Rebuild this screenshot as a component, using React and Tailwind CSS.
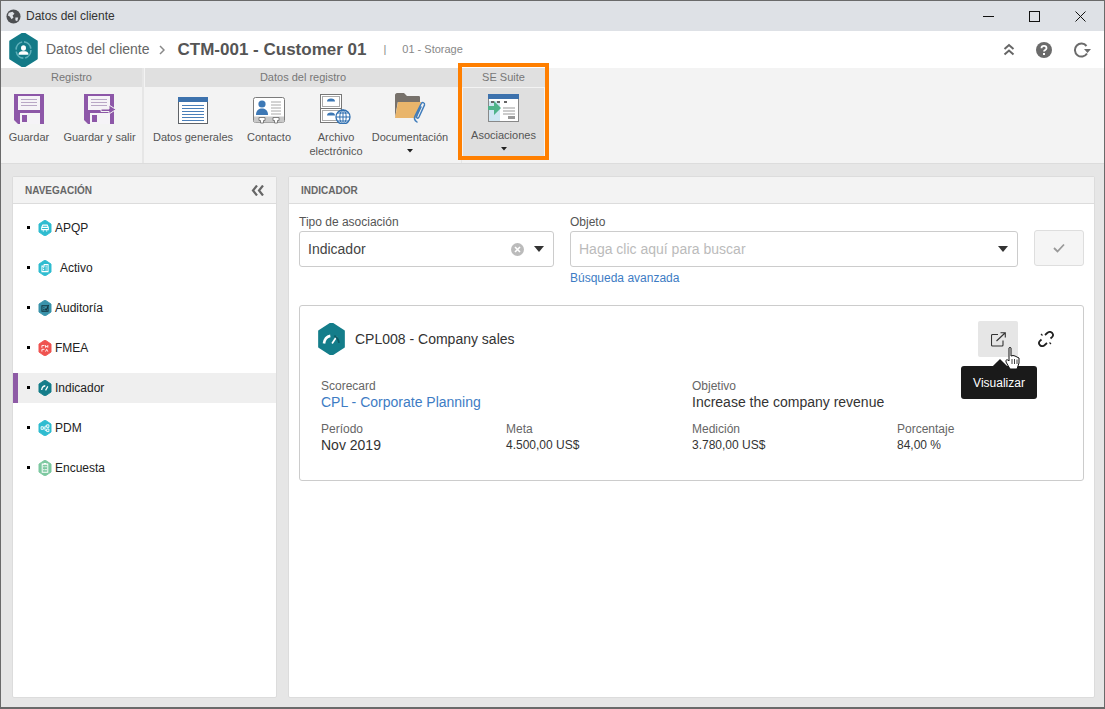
import React from "react";

const HEX = "M50 0 L93 25 L93 75 L50 100 L7 75 L7 25 Z";

function Hex({ color, size = 14, children }) {
  return (
    <svg width={size} height={size * 1.15} viewBox="0 0 100 100" preserveAspectRatio="none" className="shrink-0">
      <path d={HEX} fill={color} stroke={color} strokeWidth="6" strokeLinejoin="round" />
      {children}
    </svg>
  );
}

const SaveIcon = ({ exit }) => (
  <svg width={exit ? 32 : 30} height="30" viewBox={exit ? "0 0 32 30" : "0 0 30 30"}>
    <path d="M0 0H30V30H4L0 26Z" fill="#8d57a8" />
    <rect x="4" y="2" width="22" height="14" fill="#f5f3f7" />
    <path d="M7 5.5H23M7 8.5H23M7 11.5H23" stroke="#b9a7c6" strokeWidth="1" />
    <rect x="6" y="19" width="20" height="11" fill="#f5f3f7" />
    <rect x="8" y="21" width="5" height="7" fill="#8d57a8" />
    {exit && <path d="M17 15H25V11L32 15.5L25 20V17.5H17Z" fill="#8d57a8" stroke="#f3f3f3" strokeWidth="1" />}
  </svg>
);

const DocIcon = () => (
  <svg width="30" height="27" viewBox="0 0 30 27">
    <rect x="0.5" y="0.5" width="29" height="26" fill="#fff" stroke="#5f6368" />
    <rect x="0" y="0" width="30" height="5" fill="#3d72ad" />
    <path d="M4 8.5H26M4 11.5H26M4 14.5H26M4 17.5H26M4 20.5H26M4 23.5H26" stroke="#4a7fb9" strokeWidth="1.2" />
  </svg>
);

const ContactIcon = () => (
  <svg width="32" height="27" viewBox="0 0 32 27">
    <rect x="0.5" y="0.5" width="31" height="25" rx="2" fill="#fff" stroke="#7c7c7c" />
    <circle cx="9" cy="7" r="3.6" fill="#3d78b5" />
    <path d="M3 18C3 13 6 11.5 9 11.5S15 13 15 18Z" fill="#3d78b5" />
    <path d="M18 5H28M18 8H28M18 11H28M18 14H28M18 17H28" stroke="#a8a8a8" />
    <path d="M1 19.5H31V25.5H1Z" fill="#c9c9c9" />
    <path d="M6 20.5H12V23.5H10.5V26H7.5V23.5H6ZM20 20.5H26V23.5H24.5V26H21.5V23.5H20Z" fill="#fff" stroke="#666" strokeWidth="0.8" />
  </svg>
);

const ArchiveIcon = () => (
  <svg width="32" height="30" viewBox="0 0 32 30">
    <rect x="0.5" y="0.5" width="21" height="28" fill="#fff" stroke="#777" />
    <path d="M1 14.5H21" stroke="#777" />
    <rect x="2.5" y="2.5" width="17" height="10" fill="none" stroke="#aaa" />
    <rect x="2.5" y="16.5" width="17" height="10" fill="none" stroke="#aaa" />
    <path d="M7 7.5A4 3 0 0 1 15 7.5ZM7 21.5A4 3 0 0 1 15 21.5Z" fill="#3d78b5" />
    <circle cx="23" cy="23" r="7" fill="#fff" stroke="#2f6fb0" strokeWidth="1.3" />
    <path d="M16 23H30M23 16V30M18 19H28M18 27H28" stroke="#2f6fb0" />
    <ellipse cx="23" cy="23" rx="3.2" ry="7" fill="none" stroke="#2f6fb0" />
  </svg>
);

const FolderIcon = () => (
  <svg width="31" height="31" viewBox="0 0 31 31">
    <path d="M0 2C0 1 1 0 2 0H9L12 3H24C25 3 25 4 25 5V9H0Z" fill="#77716b" />
    <path d="M0 9V20L0 25L3 8Z" fill="#77716b" />
    <path d="M3 9H26L22 25H0Z" fill="#e9b56b" />
    <path d="M22 29C19 27 19 25 20 23L26 11C27 8.5 30 9.5 29.5 12L24 24C23 26 21 25 21.5 23.5L26 14" fill="#f3f3f3" fill-opacity="0.1" stroke="#3f7cbb" strokeWidth="1.5" strokeLinecap="round" />
  </svg>
);

const AssocIcon = () => (
  <svg width="31" height="28" viewBox="0 0 31 28">
    <rect x="0.5" y="0.5" width="30" height="27" fill="#fff" stroke="#888" />
    <rect x="1" y="7" width="11" height="20" fill="#cfe6f3" />
    <rect x="0" y="0" width="31" height="5" fill="#3d72ad" />
    <path d="M3 8H6M9 8H12M16 8H19" stroke="#666" strokeWidth="2" />
    <path d="M15 14H27M15 17H27M15 20H27" stroke="#999" />
    <rect x="20" y="22" width="7" height="3" fill="#999" />
    <path d="M-2 12H6V7L13 14L6 21V16H-2Z" transform="translate(0 0)" fill="#4fb38a" />
  </svg>
);

const Caret = () => (
  <svg width="6" height="4" viewBox="0 0 6 4" className="mx-auto"><path d="M0 0H6L3 3.5Z" fill="#222" /></svg>
);

function Tool({ w, icon, label, caret, active }) {
  return (
    <div className={`flex flex-col items-center shrink-0 ${w} ${active ? "bg-[#dfdfdf] h-[68px] mt-px" : ""}`}>
      <div className={`flex items-end justify-center ${active ? "h-[34px]" : "h-[36px]"}`}>{icon}</div>
      <div className="mt-[6px] text-[11px] leading-[14px] text-[#555] text-center whitespace-nowrap">{label}</div>
      {caret && <div className="mt-[5px]"><Caret /></div>}
    </div>
  );
}

function GroupHead({ children }) {
  return <div className="h-[19px] bg-[#e0e0e0] text-[11px] leading-[19px] text-[#777] text-center">{children}</div>;
}

const navItems = [
  { label: "APQP", color: "#2fbcd0", glyph: <path d="M26 60V46L34 32H66L74 46V60ZM34 68H42M58 68H66M26 46H74" stroke="#fff" strokeWidth="7" fill="none" /> },
  { label: "Activo", color: "#2fbcd0", pad: true, glyph: <path d="M28 72V38H44V28H72V72ZM36 48H44M54 38H62M36 60H44M54 50H62M54 62H62" stroke="#fff" strokeWidth="7" fill="none" /> },
  { label: "Auditoría", color: "#3a93ab", glyph: <path d="M28 36H72V70H28ZM38 48H46M38 60H46M50 54L58 62L76 32" stroke="#12343f" strokeWidth="7" fill="none" /> },
  { label: "FMEA", color: "#ef5350", glyph: <path d="M28 34H46M28 34V48M54 48V34L62 44L70 34V48M28 58H46M28 58V72M54 72L62 58L70 72" stroke="#fff" strokeWidth="6" fill="none" /> },
  { label: "Indicador", color: "#147d8a", active: true, glyph: <path d="M26 62C28 46 38 38 52 36M54 64L70 40" stroke="#fff" strokeWidth="9" fill="none" /> },
  { label: "PDM", color: "#2fbcd0", glyph: <path d="M22 42H38V58H22ZM62 30H78V46H62ZM62 56H78V72H62ZM38 50H50V38H62M50 50V64H62" stroke="#fff" strokeWidth="6" fill="none" /> },
  { label: "Encuesta", color: "#7cc8a0", glyph: <path d="M30 26H70V76H30ZM42 22H58M38 42H46M52 42H62M38 60H46M52 60H62" stroke="#fff" strokeWidth="7" fill="none" /> },
];

function Field({ label, value, valueClass = "text-[14px] text-[#333]", className = "" }) {
  return (
    <div className={className}>
      <div className="text-[12px] leading-[14px] text-[#666]">{label}</div>
      <div className={`leading-[17px] mt-[1px] ${valueClass}`}>{value}</div>
    </div>
  );
}

export default function App() {
  return (
    <div className="w-[1105px] h-[709px] overflow-hidden flex flex-col border border-b-2 border-[#6a6a6a] bg-[#e6e6e6] [font-family:'Liberation_Sans',Arial,sans-serif]">
      {/* title bar */}
      <div className="h-[30px] shrink-0 bg-[#dee1e6] flex items-center pl-[5px]">
        <svg width="15" height="15" viewBox="0 0 16 16">
          <circle cx="8" cy="8" r="7.5" fill="#4d4f52" />
          <path d="M3 4L7 3L9 5L7 7L8 9L6 11L4 8L2 7ZM10 9L13 9L12 13L10 12Z" fill="#dee1e6" />
        </svg>
        <span className="ml-[5px] text-[12px] text-[#333]">Datos del cliente</span>
        <div className="ml-auto flex items-center h-full text-[#111]">
          <div className="w-[46px] flex justify-center">
            <svg width="11" height="11" viewBox="0 0 11 11"><path d="M0 5.5H11" stroke="#111" /></svg>
          </div>
          <div className="w-[46px] flex justify-center">
            <svg width="11" height="11" viewBox="0 0 11 11"><rect x="0.5" y="0.5" width="10" height="10" fill="none" stroke="#111" /></svg>
          </div>
          <div className="w-[46px] flex justify-center mr-[1px]">
            <svg width="11" height="11" viewBox="0 0 11 11"><path d="M0.5 0.5L10.5 10.5M10.5 0.5L0.5 10.5" stroke="#111" /></svg>
          </div>
        </div>
      </div>

      {/* header */}
      <div className="h-[37px] shrink-0 bg-white flex items-center pl-[7px]">
        <svg width="31" height="34" viewBox="0 0 100 100" preserveAspectRatio="none">
          <path d={HEX} fill="#137a87" stroke="#137a87" strokeWidth="6" strokeLinejoin="round" />
          <circle cx="50" cy="50" r="24" fill="none" stroke="#5fb0ba" strokeWidth="5" strokeDasharray="32 6" />
          <circle cx="50" cy="44" r="8" fill="#fff" />
          <path d="M34 64C34 55 42 54 50 54S66 55 66 64Z" fill="#fff" />
        </svg>
        <span className="ml-[7px] text-[14px] text-[#666]">Datos del cliente</span>
        <svg className="ml-[9px]" width="6" height="10" viewBox="0 0 6 10"><path d="M1 1L5 5L1 9" fill="none" stroke="#888" strokeWidth="1.5" /></svg>
        <span className="ml-[13px] text-[17px] font-bold text-[#555]">CTM-001 - Customer 01</span>
        <span className="ml-[17px] text-[11px] text-[#888]">|</span>
        <span className="ml-[16px] text-[11px] text-[#888]">01 - Storage</span>
        <div className="ml-auto flex items-center gap-[21px] pr-[13px]">
          <svg width="12" height="13" viewBox="0 0 12 13"><path d="M1.5 6L6 2L10.5 6M1.5 11.5L6 7.5L10.5 11.5" fill="none" stroke="#666" strokeWidth="2" /></svg>
          <svg width="16" height="16" viewBox="0 0 16 16">
            <circle cx="8" cy="8" r="8" fill="#6b6b6b" />
            <path d="M5.5 6.2C5.5 3.2 10.5 3.2 10.5 6.2C10.5 8 8 8 8 9.6" fill="none" stroke="#fff" strokeWidth="1.8" />
            <rect x="7" y="11" width="2" height="2" fill="#fff" />
          </svg>
          <svg width="18" height="16" viewBox="0 0 18 16">
            <path d="M14 11.5A6.5 6.5 0 1 1 13.5 4" fill="none" stroke="#6b6b6b" strokeWidth="2" />
            <path d="M11 7H18L14.5 11Z" fill="#6b6b6b" />
          </svg>
        </div>
      </div>

      {/* ribbon */}
      <div className="h-[96px] shrink-0 flex bg-[#f3f3f3] border-b border-[#dcdcdc]">
        <div className="w-[143px] shrink-0 border-r-2 border-[#e6e6e6]">
          <GroupHead>Registro</GroupHead>
          <div className="flex pt-[1px]">
            <Tool w="w-[56px]" icon={<SaveIcon />} label="Guardar" />
            <Tool w="w-[85px]" icon={<SaveIcon exit />} label="Guardar y salir" />
          </div>
        </div>
        <div className="w-[317px] shrink-0 ml-[1px] border-r border-[#e6e6e6]">
          <GroupHead>Datos del registro</GroupHead>
          <div className="flex pt-[1px]">
            <Tool w="w-[96px]" icon={<DocIcon />} label="Datos generales" />
            <Tool w="w-[56px]" icon={<ContactIcon />} label="Contacto" />
            <Tool w="w-[78px]" icon={<ArchiveIcon />} label={<>Archivo<br />electrónico</>} />
            <Tool w="w-[70px]" icon={<FolderIcon />} label="Documentación" caret />
          </div>
        </div>
        <div className="w-[83px] shrink-0 relative">
          <GroupHead>SE Suite</GroupHead>
          <div className="flex justify-center">
            <Tool w="w-[81px]" icon={<AssocIcon />} label="Asociaciones" caret active />
          </div>
          <div className="absolute left-[-4px] right-[-4px] top-[-5px] h-[97px] border-[4px] border-[#ff7f00]" />
        </div>
      </div>

      {/* main */}
      <div className="flex-1 flex gap-[11px] pl-[11px] pr-[11px] pt-[12px] pb-[9px] min-h-0">
        {/* nav */}
        <div className="w-[265px] shrink-0 bg-white border border-[#dcdcdc] rounded-[2px]">
          <div className="h-[27px] bg-[#f3f3f3] border-b border-[#dcdcdc] flex items-center pl-[12px] pr-[12px]">
            <span className="text-[10px] font-bold text-[#666]">NAVEGACIÓN</span>
            <svg className="ml-auto" width="13" height="11" viewBox="0 0 13 11"><path d="M6 0.5L2 5.5L6 10.5M12 0.5L8 5.5L12 10.5" fill="none" stroke="#666" strokeWidth="2.2" /></svg>
          </div>
          <div className="pt-[9px] flex flex-col gap-[10px]">
            {navItems.map((n) => (
              <div key={n.label} className={`h-[30px] flex items-center pl-[14px] ${n.active ? "bg-[#efefef] border-l-[5px] border-[#8e5ba6] !pl-[9px]" : ""}`}>
                <span className="w-[3px] h-[3px] bg-black mb-[2px]" />
                <span className="ml-[8px] flex"><Hex color={n.color}>{n.glyph}</Hex></span>
                <span className={`text-[12px] text-[#222] ${n.pad ? "ml-[8px]" : "ml-[3px]"}`}>{n.label}</span>
              </div>
            ))}
          </div>
        </div>

        {/* content */}
        <div className="flex-1 bg-white border border-[#dcdcdc] rounded-[2px] flex flex-col">
          <div className="h-[27px] shrink-0 bg-[#f3f3f3] border-b border-[#dcdcdc] flex items-center pl-[12px]">
            <span className="text-[10px] font-bold text-[#666]">INDICADOR</span>
          </div>
          <div className="px-[10px] pt-[11px]">
            <div className="flex">
              <div className="w-[255px] shrink-0">
                <div className="text-[12px] leading-[14px] text-[#555]">Tipo de asociación</div>
                <div className="mt-[2px] h-[36px] border border-[#ccc] rounded-[3px] flex items-center pl-[8px] pr-[9px]">
                  <span className="text-[14px] text-[#444]">Indicador</span>
                  <svg className="ml-auto" width="13" height="13" viewBox="0 0 13 13">
                    <circle cx="6.5" cy="6.5" r="6.5" fill="#bbb" />
                    <path d="M4 4L9 9M9 4L4 9" stroke="#fff" strokeWidth="1.6" />
                  </svg>
                  <svg className="ml-[10px]" width="10" height="6" viewBox="0 0 10 6"><path d="M0 0H10L5 6Z" fill="#333" /></svg>
                </div>
              </div>
              <div className="w-[448px] ml-[16px] shrink-0">
                <div className="text-[12px] leading-[14px] text-[#555]">Objeto</div>
                <div className="mt-[2px] h-[36px] border border-[#ccc] rounded-[3px] flex items-center pl-[8px] pr-[9px]">
                  <span className="text-[14px] text-[#bbb]">Haga clic aquí para buscar</span>
                  <svg className="ml-auto" width="10" height="6" viewBox="0 0 10 6"><path d="M0 0H10L5 6Z" fill="#333" /></svg>
                </div>
                <div className="mt-[4px] text-[12px] leading-[14px] text-[#3d7cc4]">Búsqueda avanzada</div>
              </div>
              <div className="ml-[16px] mt-[15px] w-[50px] h-[36px] shrink-0 bg-[#f5f5f5] border border-[#dedede] rounded-[3px] flex items-center justify-center">
                <svg width="12" height="10" viewBox="0 0 12 10"><path d="M1 5L4.5 8.5L11 1.5" fill="none" stroke="#999" strokeWidth="1.8" /></svg>
              </div>
            </div>

            {/* card */}
            <div className="relative mt-[20px] h-[176px] border border-[#ccc] rounded-[3px] pl-[21px] pr-[20px]">
              <div className="h-[68px] flex items-center -ml-[4px] pb-[2px]">
                <svg width="29" height="32" viewBox="0 0 100 100" preserveAspectRatio="none">
                  <path d={HEX} fill="#147d8a" stroke="#147d8a" strokeWidth="6" strokeLinejoin="round" />
                  <path d="M24 64C26 50 34 42 46 40" fill="none" stroke="#fff" strokeWidth="9" />
                  <path d="M52 64L68 42" fill="none" stroke="#fff" strokeWidth="6" />
                  <path d="M60 40C68 44 74 52 76 62" fill="none" stroke="#0b5a64" strokeWidth="6" />
                </svg>
                <span className="ml-[9px] text-[14px] text-[#333]">CPL008 - Company sales</span>
                <div className="ml-auto flex items-center pr-[9px]">
                  <div className="w-[40px] h-[36px] bg-[#e6e6e6] rounded-[2px] flex items-center justify-center">
                    <svg width="15" height="15" viewBox="0 0 15 15">
                      <path d="M7 2.5H1.5C1 2.5 0.5 3 0.5 3.5V13C0.5 13.5 1 14 1.5 14H11C11.5 14 12 13.5 12 13V8.5" fill="none" stroke="#333" strokeWidth="1.1" />
                      <path d="M5.5 9L14 1M9.5 0.7H14.3V5.5" fill="none" stroke="#333" strokeWidth="1.1" />
                    </svg>
                  </div>
                  <svg className="ml-[20px]" width="16" height="16" viewBox="0 0 16 16">
                    <path d="M7 4L9.5 1.8C11 0.6 13 0.8 14.2 2C15.3 3.3 15.2 5 14 6.2L12.5 7.5M9 12L6.5 14.2C5 15.4 3 15.2 1.8 14C0.7 12.7 0.8 11 2 9.8L3.5 8.5" fill="none" stroke="#222" strokeWidth="1.8" />
                    <path d="M4.5 4.5L3 3M11.5 11.5L13 13" stroke="#222" strokeWidth="1.2" />
                  </svg>
                </div>
              </div>
              <div className="grid grid-cols-[185px_186px_205px_1fr] pt-[5px] gap-y-[11px]">
                <Field className="col-span-2" label="Scorecard" value="CPL - Corporate Planning" valueClass="text-[14px] text-[#3d7cc4]" />
                <Field className="col-span-2" label="Objetivo" value="Increase the company revenue" />
                <Field label="Período" value="Nov 2019" />
                <Field label="Meta" value="4.500,00 US$" valueClass="text-[12px] text-[#333]" />
                <Field label="Medición" value="3.780,00 US$" valueClass="text-[12px] text-[#333]" />
                <Field label="Porcentaje" value="84,00 %" valueClass="text-[12px] text-[#333]" />
              </div>

              {/* tooltip */}
              <div className="absolute left-[661px] top-[60px] w-[76px] h-[33px] bg-[#1a1a1a] rounded-[3px] flex items-center justify-center text-[12px] text-white">
                Visualizar
                <span className="absolute left-[34px] top-[-5px] w-[10px] h-[10px] bg-[#1a1a1a] rotate-45" />
              </div>
              {/* cursor */}
              <svg className="absolute left-[705px] top-[41px]" width="15" height="23" viewBox="0 0 15 23">
                <path d="M4 1C4 0.3 6 0.3 6 1V9L8 8.5L10 9L12 10L14 11V16L12 22H5L1 15V13.5C1 12.5 3 12.5 4 14Z" fill="#fff" stroke="#111" strokeWidth="1" />
                <path d="M7 12V17M9.5 12V17M12 12.5V17" stroke="#111" strokeWidth="0.8" />
              </svg>
            </div>
          </div>
        </div>
      </div>
    </div>
  );
}
